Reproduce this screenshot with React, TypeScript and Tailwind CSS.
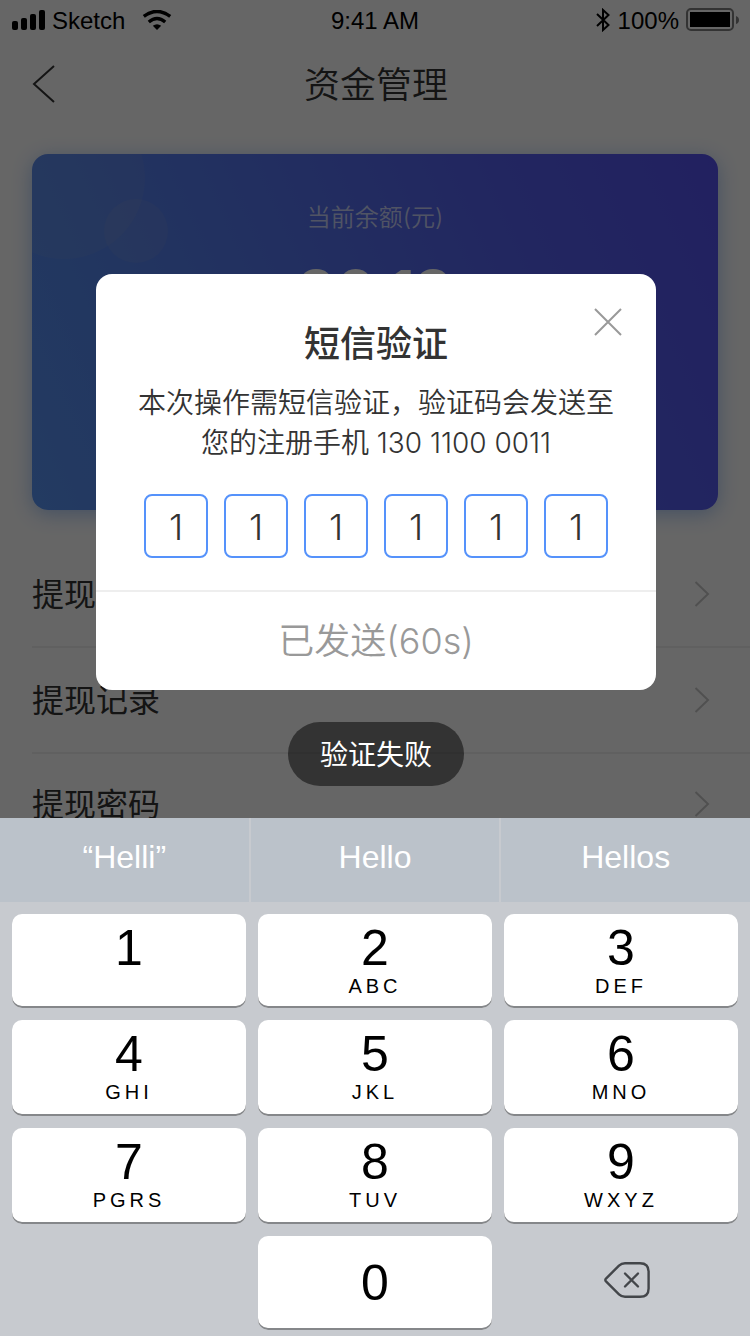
import React from "react";

const KEYS = [
  ["1", ""],
  ["2", "ABC"],
  ["3", "DEF"],
  ["4", "GHI"],
  ["5", "JKL"],
  ["6", "MNO"],
  ["7", "PGRS"],
  ["8", "TUV"],
  ["9", "WXYZ"],
];

function StatusBar() {
  return (
    <div className="grid h-10 grid-cols-3 items-center px-3 text-2xl text-black font-['Liberation_Sans',sans-serif]">
      <div className="flex items-center">
        <svg width="33" height="20" viewBox="0 0 33 20" aria-hidden="true">
          <rect x="0" y="11" width="6" height="9" rx="2" />
          <rect x="9" y="8" width="6" height="12" rx="2" />
          <rect x="18" y="4" width="6" height="16" rx="2" />
          <rect x="27" y="0" width="6" height="20" rx="2" />
        </svg>
        <span className="ml-[7px] pt-[2px]">Sketch</span>
        <svg className="ml-[17px]" width="30" height="20" viewBox="0 0 30 20" fill="none" aria-hidden="true">
          <path d="M1.8 6.4 Q15 -3.6 28.2 6.4" stroke="#000" strokeWidth="3.4" />
          <path d="M6.8 12 Q15 5.2 23.2 12" stroke="#000" strokeWidth="3.4" />
          <path d="M15 20 L10.8 15.8 Q15 12.6 19.2 15.8 Z" fill="#000" />
        </svg>
      </div>
      <span className="pt-[2px] text-center">9:41 AM</span>
      <div className="flex items-center justify-end">
        <svg width="14" height="24" viewBox="0 0 14 24" fill="none" stroke="#000" strokeWidth="2" aria-hidden="true">
          <path d="M1 6 L12.5 17 L7 22 V2 L12.5 7 L1 18" />
        </svg>
        <span className="ml-2 pt-[2px]">100%</span>
        <svg className="ml-[7px] -mr-[2px]" width="54" height="24" viewBox="0 0 54 24" aria-hidden="true">
          <rect x="1" y="1" width="46" height="21" rx="4" fill="none" stroke="#000" strokeOpacity="0.5" strokeWidth="2" />
          <rect x="4" y="4" width="40" height="15" />
          <path d="M50 8 Q53 9 53 12 Q53 15 50 16 Z" fillOpacity="0.5" />
        </svg>
      </div>
    </div>
  );
}

function MenuRow({ label }: { label: string }) {
  return (
    <li className="group border-b-2 border-[#f0f0f0]">
      <a href="#" className="flex h-[104px] items-center justify-between pr-10 text-[32px] text-[#333] group-last:h-[100px]">
        <span className="pt-[2px]">{label}</span>
        <svg width="16" height="26" viewBox="0 0 16 26" fill="none" stroke="#c8c8c8" strokeWidth="2" aria-hidden="true">
          <path d="M1.5 1 L14 13 L1.5 25" />
        </svg>
      </a>
    </li>
  );
}

function FundsPage() {
  return (
    <div className="bg-white">
      <StatusBar />
      <header className="grid h-[88px] grid-cols-[1fr_auto_1fr] items-center pr-[30px] pl-8">
        <button type="button" aria-label="返回" className="justify-self-start">
          <svg width="24" height="40" viewBox="0 0 24 40" fill="none" stroke="#333" strokeWidth="2">
            <path d="M22 2 L2 20 L22 38" />
          </svg>
        </button>
        <h1 className="pt-[2px] text-4xl font-[350] text-[#333]">资金管理</h1>
      </header>
      <section className="relative mx-8 mt-[26px] h-[356px] rounded-2xl bg-[linear-gradient(66deg,#5894f4,#5586f0_22%,#5560f0_72%,#5652f0)] pt-12 text-center shadow-[0_4px_20px_rgba(85,146,240,0.5)]">
        <svg className="absolute inset-0 size-full rounded-2xl" aria-hidden="true">
          <circle cx="32" cy="24" r="81" fill="#ffd9a0" fillOpacity="0.05" />
          <circle cx="104" cy="77" r="32" fill="#ffd9a0" fillOpacity="0.06" />
        </svg>
        <p className="text-2xl leading-8 font-[350] text-white/70">当前余额(元)</p>
        <p className="mt-4 text-[60px] leading-[84px] font-bold text-white">20.12</p>
      </section>
      <ul className="mt-8 pl-8">
        <MenuRow label="提现" />
        <MenuRow label="提现记录" />
        <MenuRow label="提现密码" />
      </ul>
    </div>
  );
}

function VerifyDialog() {
  return (
    <div className="absolute inset-0 flex flex-col items-center bg-black/60 pt-[274px] pr-[94px] pl-24">
      <div role="dialog" aria-labelledby="verify-title" className="relative w-full rounded-2xl bg-white text-center text-[#333]">
        <button type="button" aria-label="关闭" className="absolute top-[34px] right-[34px]">
          <svg width="28" height="28" viewBox="0 0 28 28" fill="none" stroke="#999" strokeWidth="2">
            <path d="M1 1 L27 27 M27 1 L1 27" />
          </svg>
        </button>
        <h2 id="verify-title" className="pt-[45px] text-4xl leading-[50px] font-medium">短信验证</h2>
        <p className="mt-[14px] text-[28px] leading-10 font-[350]">
          本次操作需短信验证，验证码会发送至
          <br />
          您的注册手机 130 1100 0011
        </p>
        <div className="mt-[31px] flex justify-center gap-4">
          {[1, 2, 3, 4, 5, 6].map((n) => (
            <input
              key={n}
              aria-label={`验证码第${n}位`}
              inputMode="numeric"
              maxLength={1}
              defaultValue="1"
              className="size-16 rounded-lg border-2 border-[#5592fb] pt-[2px] text-center text-4xl font-[350]"
            />
          ))}
        </div>
        <button type="button" className="mt-8 h-[100px] w-full border-t-2 border-[#eee] text-4xl font-[350] text-[#999]">
          已发送(60s)
        </button>
      </div>
      <div role="status" className="mt-8 flex h-16 items-center rounded-full bg-black/50 px-8 pt-[2px] text-[28px] text-white">
        验证失败
      </div>
    </div>
  );
}

function Keyboard() {
  return (
    <div className="bg-[#c7cacf] text-black font-['Liberation_Sans',sans-serif]">
      <div className="grid h-[84px] grid-cols-3 gap-[2px] text-[32px] text-white">
        {["“Helli”", "Hello", "Hellos"].map((word) => (
          <button key={word} type="button" className="bg-[#bbc2ca] pb-[6px]">
            {word}
          </button>
        ))}
      </div>
      <div className="grid grid-cols-3 grid-rows-[94px_96px_96px_94px] gap-3 px-3 pt-3 pb-[6px]">
        {KEYS.map(([digit, letters]) => (
          <button
            key={digit}
            type="button"
            className="flex flex-col items-center justify-start rounded-[10px] bg-white pt-2 shadow-[inset_0_-2px_0_#85878a]"
          >
            <span className="text-[50px] leading-[52px]">{digit}</span>
            <span className="text-xl leading-6 tracking-[4px]">{letters}</span>
          </button>
        ))}
        <button
          type="button"
          className="col-start-2 rounded-[10px] bg-white text-[50px] shadow-[inset_0_-2px_0_#85878a]"
        >
          0
        </button>
        <button type="button" aria-label="删除" className="flex items-center justify-center pb-[6px] pl-3">
          <svg width="46" height="36" viewBox="0 0 46 36" fill="none" stroke="#43464a" strokeWidth="2.4" strokeLinecap="round">
            <path d="M2 16.6 L15 3.6 Q17.5 1.2 21 1.2 H36 Q44.6 1.2 44.6 9.5 V26.5 Q44.6 34.8 36 34.8 H21 Q17.5 34.8 15 32.4 L2 19.4 Q0.6 18 2 16.6 Z" />
            <path d="M21 11.5 L34 24.5 M34 11.5 L21 24.5" />
          </svg>
        </button>
      </div>
    </div>
  );
}

export default function App() {
  return (
    <div className="flex h-screen flex-col font-['Inter','Noto_Sans_CJK_SC',sans-serif]">
      <main className="relative min-h-0 flex-1 overflow-hidden">
        <FundsPage />
        <VerifyDialog />
      </main>
      <Keyboard />
    </div>
  );
}
